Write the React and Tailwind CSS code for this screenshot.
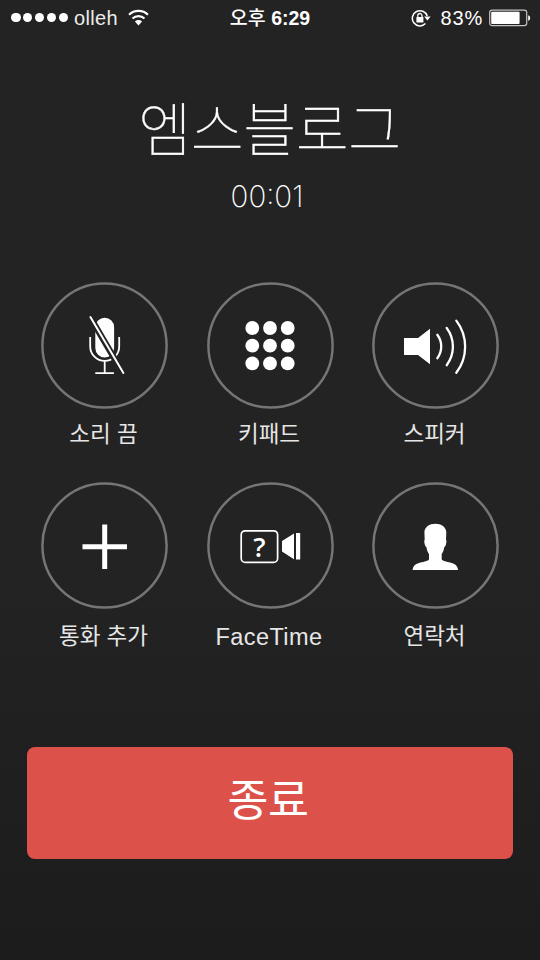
import React from "react";

function SignalDots() {
    return (
        <div className="flex gap-[2.4px]">
            {[0, 1, 2, 3, 4].map((i) => (
                <span
                    key={i}
                    className="h-[9.5px] w-[9.5px] rounded-full bg-white"
                />
            ))}
        </div>
    );
}

function WifiIcon() {
    return (
        <svg className="h-[17px] w-[21px]" viewBox="0 0 20 16" fill="none">
            <path
                d="M1 5.400a13 13 0 0 1 18 0M4.300 8.900a8.300 8.300 0 0 1 11.400 0"
                stroke="#fff"
                strokeWidth="2.1"
            />
            <path d="M6.600 11.700a5 5 0 0 1 6.800 0L10 15.600z" fill="#fff" />
        </svg>
    );
}

function RotationLockIcon() {
    return (
        <svg className="h-[18px] w-5" viewBox="0 0 20 18" fill="none">
            <path
                d="M16.200 7A7.600 7.600 0 1 0 14.400 14.600"
                stroke="#fff"
                strokeWidth="1.5"
            />
            <path d="M13.200 7.600h6.400l-3.200 3.800z" fill="#fff" />
            <rect x="5.4" y="8" width="7" height="5.4" rx=".5" fill="#fff" />
            <path
                d="M6.800 8.400V6.600a2.100 2.100 0 0 1 4.200 0v1.800"
                stroke="#fff"
                strokeWidth="1.3"
            />
        </svg>
    );
}

function BatteryIcon() {
    return (
        <svg className="h-[18px] w-[42px]" viewBox="0 0 42 18" fill="none">
            <rect
                x=".7"
                y="1.2"
                width="37"
                height="15.4"
                rx="2.4"
                stroke="#c4c4c4"
                strokeWidth="1.2"
            />
            <rect x="2.2" y="2.8" width="28.4" height="12.2" rx="1" fill="#fff" />
            <path d="M39.200 6.200c2.600.6 2.600 5 0 5.600z" fill="#fff" />
        </svg>
    );
}

function StatusBar() {
    return (
        <header className="grid h-[35px] grid-cols-[1fr_auto_1fr] items-center pl-[11px] pr-[9px] text-[20px] leading-none text-white">
            <div className="flex items-center">
                <SignalDots />
                <span className="ml-[6px] mr-[10px] tracking-[0.3px] text-[#ececec]">
                    olleh
                </span>
                <WifiIcon />
            </div>
            <span className="-ml-0.5 pt-0.5 text-[19.5px] font-medium">
                오후 <span className="font-bold">6:29</span>
            </span>
            <div className="flex items-center justify-end">
                <RotationLockIcon />
                <span className="ml-[10px] mr-[6px] tracking-[0.8px]">83%</span>
                <BatteryIcon />
            </div>
        </header>
    );
}

function MuteIcon() {
    return (
        <>
            <rect x="54.3" y="35.7" width="18.8" height="39.8" rx="9.4" fill="#fff" />
            <path
                d="M49.200 55v9.400a14.500 14.500 0 0 0 29 0V55M63.700 79v12M54.300 91.200h18.600"
                stroke="#fff"
                strokeWidth="1.8"
            />
            <path d="M48.500 34l34 58" stroke="#232323" strokeWidth="6.4" />
            <path
                d="M49.400 35l33 56"
                stroke="#fff"
                strokeWidth="2"
                strokeLinecap="round"
            />
        </>
    );
}

function KeypadIcon() {
    return [46, 63.7, 81.4].map((cy) =>
        [45.3, 63, 80.7].map((cx) => (
            <circle key={`${cx}-${cy}`} cx={cx} cy={cy} r="6.9" fill="#fff" />
        )),
    );
}

function SpeakerIcon() {
    return (
        <>
            <path d="M32 56h14L58 46.800v35.400L46 73H32z" fill="#fff" />
            <path
                d="M65.300 52.800a19.400 19.400 0 0 1 0 23.400M74.700 46a31 31 0 0 1 0 37.200M84.300 38.600a43 43 0 0 1 0 52.200"
                stroke="#fff"
                strokeWidth="2.3"
                strokeLinecap="round"
            />
        </>
    );
}

function PlusIcon() {
    return (
        <path d="M41.500 64.700h44.500M63.700 42.500v44.500" stroke="#fff" strokeWidth="5" />
    );
}

function FaceTimeIcon() {
    return (
        <>
            <rect
                x="34.2"
                y="48.8"
                width="36.4"
                height="31.6"
                rx="4"
                stroke="#fff"
                strokeWidth="1.7"
            />
            <text
                x="52.4"
                y="74.6"
                textAnchor="middle"
                className="fill-white font-['Open_Sans'] text-[27px] font-semibold"
            >
                ?
            </text>
            <path d="M75 59l12-7.400v25.600L75 69.400zM89 51h4.200v26.600H89z" fill="#fff" />
        </>
    );
}

function ContactIcon() {
    return (
        <path
            d="M63.300 41.700c6 0 10.800 3 11 8.600L74 57.600c.7.8.4 3.800-.4 6-.3.8-.8 1.300-1.300 1.400-.5 3-1.200 5-2.600 7V77.500c2 2.200 6.300 2.300 10 3.500 4 1.300 6 3.200 6.400 7H40.600c.4-3.800 2.400-5.700 6.400-7 3.700-1.200 8-1.300 10-3.500V72c-1.400-2-2.100-4-2.600-7-.5-.1-1-.6-1.300-1.400-.8-2.200-1.100-5.200-.4-6l-.3-7.300c.2-5.600 4.900-8.600 10.900-8.600z"
            fill="#fff"
        />
    );
}

const topActions = [
    { label: "소리 끔", Icon: MuteIcon },
    { label: "키패드", Icon: KeypadIcon },
    { label: "스피커", Icon: SpeakerIcon },
];

const bottomActions = [
    { label: "통화 추가", Icon: PlusIcon },
    { label: "FaceTime", Icon: FaceTimeIcon, latin: true },
    { label: "연락처", Icon: ContactIcon },
];

function CallAction({ label, Icon, latin }) {
    return (
        <button className="flex flex-col items-center">
            <svg className="h-[127px] w-[127px]" viewBox="0 0 127 127" fill="none">
                <circle
                    cx="63.5"
                    cy="63.5"
                    r="62.1"
                    stroke="#757575"
                    strokeWidth="2.5"
                />
                <Icon />
            </svg>
            <span
                className={`whitespace-nowrap leading-8 text-[#e6e6e6] ${
                    latin
                        ? "-ml-0.5 text-[23.5px] tracking-[0.4px]"
                        : "-ml-0.5 text-[22.5px]"
                }`}
            >
                {label}
            </span>
        </button>
    );
}

function ActionRow({ actions, className }) {
    return (
        <div
            className={`grid grid-cols-[127px_127px_127px] gap-x-[38.5px] ${className}`}
        >
            {actions.map((action) => (
                <CallAction key={action.label} {...action} />
            ))}
        </div>
    );
}

export default function App() {
    return (
        <div className="flex h-[960px] w-[540px] flex-col overflow-hidden bg-[#232323] bg-linear-to-b from-[#232323] from-60% to-[#1c1c1c] font-['Liberation_Sans','Noto_Sans_CJK_KR',sans-serif]">
            <StatusBar />

            <div className="flex flex-col items-center pt-[53px] text-white">
                <h1 className="mr-px font-['Noto_Sans_CJK_KR',sans-serif] text-[57.5px] font-thin leading-[76px] tracking-[-0.4px] [-webkit-text-stroke:0.3px_white]">
                    엠스블로그
                </h1>
                <p className="mr-1.5 mt-3 font-['Inter',sans-serif] text-[29.5px] font-extralight leading-10">
                    00:01
                </p>
            </div>

            <main className="mt-[66px] flex flex-col gap-[31px] pl-[41px]">
                <ActionRow
                    actions={topActions}
                    className="[&_span]:mt-[10px]"
                />
                <ActionRow
                    actions={bottomActions}
                    className="[&_span]:mt-[12px]"
                />
            </main>

            <button className="mx-[27px] mt-[94px] flex h-[112px] items-center justify-center rounded-lg bg-[#dc524a] pb-1 pr-1 text-[44.5px] leading-none tracking-[-0.5px] text-white">
                종료
            </button>
        </div>
    );
}
